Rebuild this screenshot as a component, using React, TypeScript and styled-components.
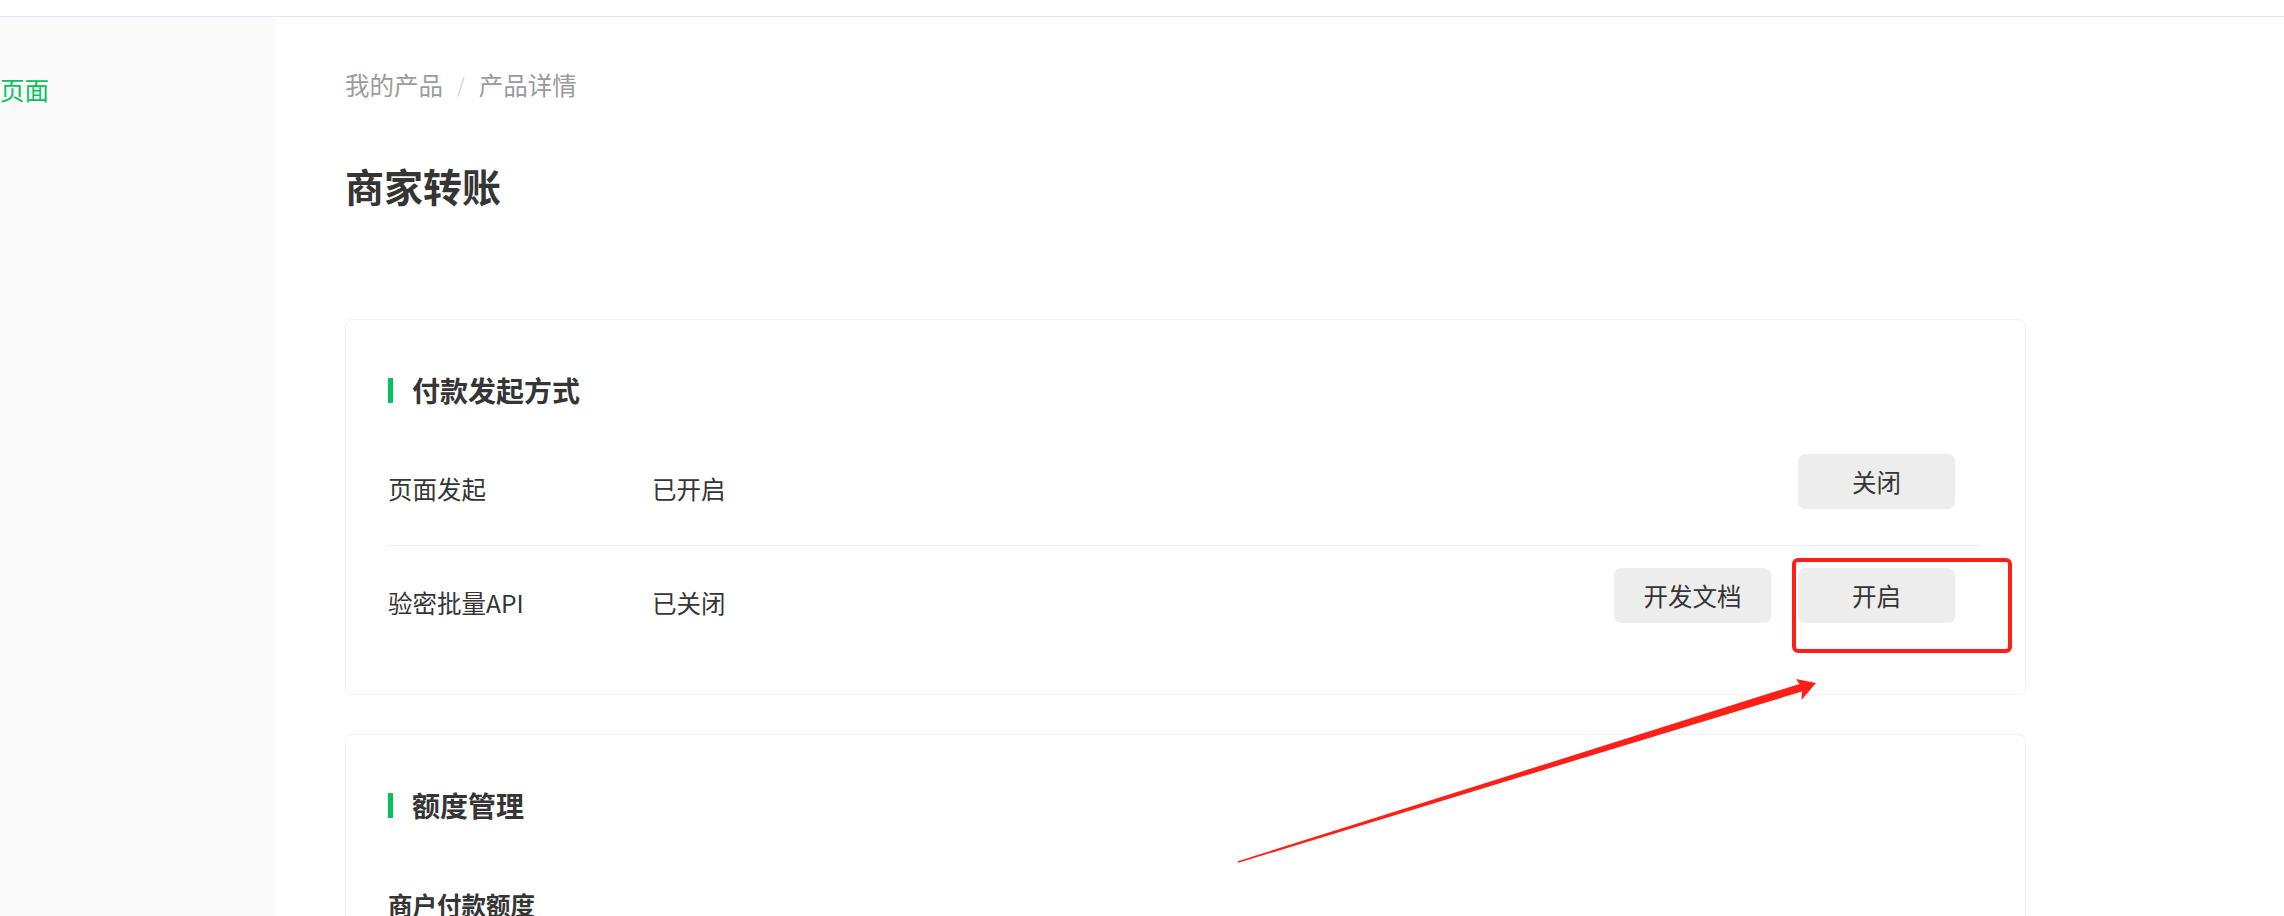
import React from "react";
import styled, { createGlobalStyle } from "styled-components";

const GlobalStyle = createGlobalStyle`
  html, body {
    margin: 0;
    padding: 0;
    background: #ffffff;
    overflow: hidden;
  }
  body {
    font-family: "Noto Sans CJK SC", "Noto Sans", "Liberation Sans", sans-serif;
    color: #353535;
  }
  * { box-sizing: border-box; }
`;

const Page = styled.div`
  position: relative;
  width: 2284px;
  height: 916px;
  overflow: hidden;
  display: flex;
  flex-direction: column;
`;

const TopBar = styled.div`
  height: 17px;
  flex-shrink: 0;
  background: #ffffff;
  border-bottom: 1px solid #e3e6f0;
`;

const Body = styled.div`
  flex: 1;
  display: flex;
  min-height: 0;
`;

const Sidebar = styled.aside`
  width: 276px;
  flex-shrink: 0;
  background: #fafafa;
  padding-top: 56px;
`;

const NavItem = styled.div<{ $active?: boolean }>`
  font-size: 24.5px;
  line-height: 34px;
  color: ${(p) => (p.$active ? "#07c160" : "#353535")};
  white-space: nowrap;
`;

const Main = styled.main`
  flex: 1;
  padding: 51px 258px 0 69px;
  display: flex;
  flex-direction: column;
`;

const Breadcrumb = styled.nav`
  display: flex;
  align-items: center;
  gap: 14px;
  font-size: 24.5px;
  line-height: 34px;
  color: #9b9b9b;
`;

const Sep = styled.span`
  color: #d6d6d6;
  font-size: 20px;
`;

const Title = styled.h1`
  margin: 56px 0 0;
  font-size: 39px;
  line-height: 54px;
  font-weight: 700;
  color: #353535;
`;

const Card = styled.section<{ $top: number }>`
  margin-top: ${(p) => p.$top}px;
  background: #ffffff;
  border: 1px solid #f4f4f4;
  border-radius: 8px;
  box-shadow: 0 0 6px rgba(0, 0, 0, 0.025);
  padding: 56px 44px 36px 42px;
  flex-shrink: 0;
`;

const SectionHead = styled.h2`
  margin: 0;
  display: flex;
  align-items: center;
  gap: 19px;
  font-size: 28px;
  line-height: 28px;
  font-weight: 700;
  color: #353535;
  &::before {
    content: "";
    width: 5px;
    height: 25px;
    background: #07c160;
    flex-shrink: 0;
  }
`;

const RowList = styled.div`
  margin-top: 28px;
  display: flex;
  flex-direction: column;
`;

const Row = styled.div`
  display: flex;
  align-items: center;
  height: 113px;
  & + & {
    border-top: 1px solid #ececec;
  }
`;

const Label = styled.div`
  width: 264px;
  font-size: 24.5px;
  color: #353535;
`;

const Status = styled.div`
  flex: 1;
  font-size: 24.5px;
  color: #353535;
`;

const Actions = styled.div`
  align-self: flex-start;
  margin-top: 22px;
  margin-right: 26px;
  display: flex;
  gap: 27px;
`;

const Button = styled.button`
  width: 157px;
  height: 55px;
  border: none;
  border-radius: 7px;
  background: #ededed;
  color: #353535;
  font-family: inherit;
  font-size: 24.5px;
  padding: 0;
  cursor: pointer;
`;

const SubHead = styled.h3`
  margin: 69px 0 0;
  font-size: 24.5px;
  line-height: 34px;
  font-weight: 700;
  color: #353535;
`;

const Overlay = styled.svg`
  position: absolute;
  left: 0;
  top: 0;
  width: 2284px;
  height: 916px;
  pointer-events: none;
`;

export default function App() {
  return (
    <>
      <GlobalStyle />
      <Page>
        <TopBar />
        <Body>
          <Sidebar>
            <NavItem $active>页面</NavItem>
          </Sidebar>
          <Main>
            <Breadcrumb>
              <span>我的产品</span>
              <Sep>/</Sep>
              <span>产品详情</span>
            </Breadcrumb>
            <Title>商家转账</Title>
            <Card $top={107}>
              <SectionHead>付款发起方式</SectionHead>
              <RowList>
                <Row>
                  <Label>页面发起</Label>
                  <Status>已开启</Status>
                  <Actions>
                    <Button>关闭</Button>
                  </Actions>
                </Row>
                <Row>
                  <Label>验密批量API</Label>
                  <Status>已关闭</Status>
                  <Actions>
                    <Button>开发文档</Button>
                    <Button>开启</Button>
                  </Actions>
                </Row>
              </RowList>
            </Card>
            <Card $top={39}>
              <SectionHead>额度管理</SectionHead>
              <SubHead>商户付款额度</SubHead>
            </Card>
          </Main>
        </Body>
        <Overlay viewBox="0 0 2284 916">
          <rect
            x="1794"
            y="560"
            width="216"
            height="91"
            rx="4"
            fill="none"
            stroke="#ff1f16"
            strokeWidth="4"
          />
          <polygon
            fill="#ff1f16"
            points="1237.8,861.2 1799.5,683.9 1796,679 1816,683 1801.5,700 1801.9,691.5 1238.2,862.8"
          />
        </Overlay>
      </Page>
    </>
  );
}
